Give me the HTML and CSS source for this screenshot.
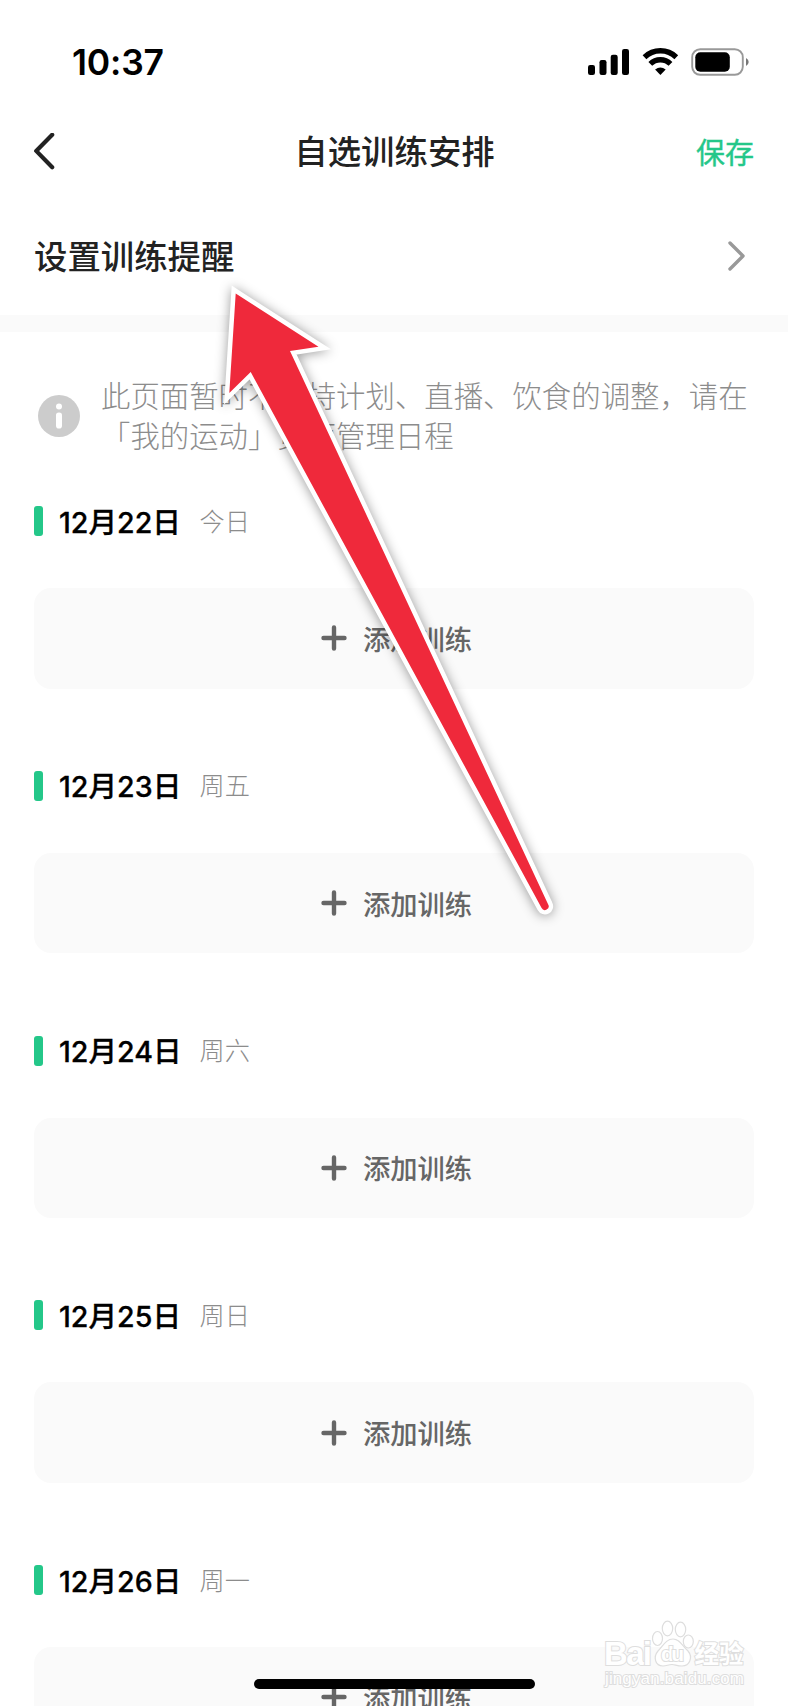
FILE: index.html
```html
<!DOCTYPE html>
<html lang="zh-CN">
<head>
<meta charset="utf-8">
<title>自选训练安排</title>
<link rel="stylesheet" href="styles.css">
</head>
<body>
<div class="screen">
  <header class="status">
    <span class="clock">10:37</span>
    <svg class="status-icons" width="164" height="30" viewBox="0 0 164 30">
      <rect x="0" y="18" width="7" height="10" rx="2.2"/>
      <rect x="11.5" y="13" width="7" height="15" rx="2.2"/>
      <rect x="22.7" y="7.7" width="7" height="20.3" rx="2.2"/>
      <rect x="34" y="2" width="7" height="26" rx="2.2"/>
      <g fill="none" stroke="#000" stroke-width="5.4">
        <path d="M56.5 10.200A23 23 0 0 1 88.300 10.200"/>
        <path d="M62.300 16.900A14.500 14.500 0 0 1 82.500 16.900"/>
      </g>
      <path d="M67.100 22.600Q72.400 18.600 77.700 22.600L72.400 28Z"/>
      <rect x="104.200" y="2.200" width="50.600" height="25.600" rx="8" fill="none" stroke="#999" stroke-width="1.900"/>
      <rect x="107.300" y="5.300" width="34.500" height="19.400" rx="5"/>
      <path d="M158 11Q160.700 12.500 160.700 15T158 19Z" fill="#777"/>
    </svg>
  </header>

  <nav class="navbar">
    <svg class="back" width="22" height="38" viewBox="0 0 22 38"><path d="M19.200 1.700L3.200 17.900L19.200 34.200"/></svg>
    <h1 class="title">自选训练安排</h1>
    <span class="save">保存</span>
  </nav>

  <section class="reminder">
    <span>设置训练提醒</span>
    <svg class="chevron" width="18" height="32" viewBox="0 0 18 32"><path d="M2 3L15 16L2 29"/></svg>
  </section>
  <div class="divider"></div>

  <section class="notice">
    <svg width="42" height="42" viewBox="0 0 42 42">
      <circle cx="21" cy="21" r="21" fill="#ccc"/>
      <circle cx="21" cy="11.500" r="3" fill="#fff"/>
      <rect x="18" y="17.500" width="6" height="16" rx="2.800" fill="#fff"/>
    </svg>
    <p>此页面暂时不支持计划、直播、饮食的调整，请在<br>「我的运动」页面管理日程</p>
  </section>

  <main class="days">
    <section class="day">
      <div class="day-head"><i class="mark"></i><b class="date">12月22日</b><span class="weekday">今日</span></div>
      <div class="add"><svg class="plus" width="26" height="26" viewBox="0 0 26 26"><path d="M13 2.500V23.500M2.500 13H23.500"/></svg><span>添加训练</span></div>
    </section>
    <section class="day">
      <div class="day-head"><i class="mark"></i><b class="date">12月23日</b><span class="weekday">周五</span></div>
      <div class="add"><svg class="plus" width="26" height="26" viewBox="0 0 26 26"><path d="M13 2.500V23.500M2.500 13H23.500"/></svg><span>添加训练</span></div>
    </section>
    <section class="day">
      <div class="day-head"><i class="mark"></i><b class="date">12月24日</b><span class="weekday">周六</span></div>
      <div class="add"><svg class="plus" width="26" height="26" viewBox="0 0 26 26"><path d="M13 2.500V23.500M2.500 13H23.500"/></svg><span>添加训练</span></div>
    </section>
    <section class="day">
      <div class="day-head"><i class="mark"></i><b class="date">12月25日</b><span class="weekday">周日</span></div>
      <div class="add"><svg class="plus" width="26" height="26" viewBox="0 0 26 26"><path d="M13 2.500V23.500M2.500 13H23.500"/></svg><span>添加训练</span></div>
    </section>
    <section class="day">
      <div class="day-head"><i class="mark"></i><b class="date">12月26日</b><span class="weekday">周一</span></div>
      <div class="add"><svg class="plus" width="26" height="26" viewBox="0 0 26 26"><path d="M13 2.500V23.500M2.500 13H23.500"/></svg><span>添加训练</span></div>
    </section>
  </main>

  <div class="home-indicator"></div>

  <svg class="arrow" width="360" height="680" viewBox="200 260 360 680">
    <path d="M235.700 293.500L318.500 346.700L290 351L548.200 904.500A3.700 3.700 0 0 1 541.600 908L250.700 372L229.300 393Z"/>
  </svg>

  <svg class="watermark" width="150" height="74" viewBox="600 1616 150 74">
    <text class="wm-brand" x="604" y="1665" textLength="48">Bai</text>
    <ellipse cx="657.500" cy="1638.500" rx="5" ry="7"/>
    <ellipse cx="667.500" cy="1628.500" rx="5.200" ry="7.300"/>
    <ellipse cx="680.500" cy="1629.500" rx="5.200" ry="7.300"/>
    <ellipse cx="688.300" cy="1641.500" rx="5" ry="6.500"/>
    <path d="M673 1639C680 1639 682 1646 688 1651C693 1657 690 1666 682 1666C677 1666 675 1664.500 672 1664.500C668 1664.500 667 1666 663 1666C655 1666 653 1657 658 1651C663 1646 666 1639 673 1639Z"/>
    <text class="wm-du" x="661" y="1661" textLength="23">du</text>
    <text class="wm-cjk" x="694.500" y="1663">经验</text>
    <text class="wm-url" x="605" y="1683.500" textLength="139">jingyan.baidu.com</text>
  </svg>
</div>
</body>
</html>
```
FILE: styles.css
```css
* { box-sizing: border-box; }

body {
  margin: 0;
  background: #fff;
  font-family: Inter, "Noto Sans CJK SC", sans-serif;
  color: #222;
}

.screen {
  position: relative;
  width: 788px;
  height: 1706px;
  overflow: hidden;
}

.status {
  display: flex;
  justify-content: space-between;
  align-items: center;
  height: 124px;
  padding: 0 36px 0 72px;
}

.clock {
  padding-top: 1px;
  font-size: 35.5px;
  font-weight: 600;
  color: #000;
  letter-spacing: -0.2px;
}

.navbar {
  display: grid;
  grid-template-columns: 1fr auto 1fr;
  align-items: center;
  height: 56px;
  padding: 0 34px 0 35px;
}

.back {
  margin-left: -2px;
  fill: none;
  stroke: #222;
  stroke-width: 4.2;
  stroke-linecap: round;
  stroke-linejoin: round;
}

.title {
  margin: 0;
  font-size: 33.4px;
  line-height: 48px;
  font-weight: 500;
}

.save {
  justify-self: end;
  padding-bottom: 2px;
  font-size: 29px;
  font-weight: 400;
  color: #24c789;
  -webkit-text-stroke: 0.4px #24c789;
}

.reminder {
  display: flex;
  justify-content: space-between;
  align-items: center;
  height: 134.500px;
  padding: 17px 42px 0 34px;
  font-size: 33.4px;
  line-height: 48px;
  font-weight: 500;
}

.reminder span { padding-top: 3px; }

.chevron { fill: none; stroke: #999; stroke-width: 3.4; stroke-linecap: round; stroke-linejoin: round; }

.divider { height: 17px; background: #fafafa; }

.notice {
  display: flex;
  align-items: center;
  gap: 21px;
  height: 169.500px;
  padding-left: 38px;
}

.notice p {
  margin: 0;
  padding-bottom: 4px;
  font-family: "Noto Sans CJK SC", sans-serif;
  font-size: 29.4px;
  line-height: 40px;
  font-weight: 300;
  color: #8c8c8c;
  white-space: nowrap;
}

.days { padding: 0 34px; }

.day { height: 264.75px; }

.day-head {
  display: flex;
  align-items: center;
  height: 40px;
}

.mark { width: 8.500px; height: 30px; border-radius: 3px; background: #24c789; }

.date {
  width: 141px;
  padding: 0 0 2px 16.500px;
  font-size: 28.600px;
  font-weight: 500;
  color: #000;
  white-space: nowrap;
  -webkit-text-stroke: 0.3px #000;
}

.weekday {
  padding: 0 0 3px 16px;
  font-size: 25.2px;
  font-weight: 300;
  color: #8c8c8c;
}

.add {
  display: flex;
  align-items: center;
  justify-content: center;
  gap: 16px;
  height: 100.500px;
  margin-top: 47px;
  padding-left: 5px;
  border-radius: 17px;
  background: #fafafa;
  font-size: 27.3px;
  font-weight: 500;
  color: #666;
}

.add span { padding-bottom: 1px; }

.plus { fill: none; stroke: #666; stroke-width: 4.4; stroke-linecap: round; }

.home-indicator {
  position: absolute;
  left: 254px;
  bottom: 17px;
  width: 281px;
  height: 10.500px;
  border-radius: 6px;
  background: #000;
}

.arrow {
  position: absolute;
  left: 200px;
  top: 260px;
  fill: #ef293b;
  stroke: #fff;
  stroke-width: 9px;
  stroke-linejoin: miter;
  paint-order: stroke;
  filter: drop-shadow(0 1px 6px rgba(0, 0, 0, 0.4));
}

.watermark {
  position: absolute;
  left: 600px;
  top: 1616px;
  fill: #fff;
  stroke: #dedede;
  stroke-width: 1.2px;
}

.watermark text { paint-order: stroke; stroke-width: 2px; }
.wm-brand { font: 700 33px "Liberation Sans", sans-serif; }
.wm-du { font: 700 21px "Liberation Sans", sans-serif; }
.wm-cjk { font: 700 24.500px "Noto Sans CJK SC", sans-serif; }
.wm-url { font: 400 17px "Liberation Sans", sans-serif; }
```
